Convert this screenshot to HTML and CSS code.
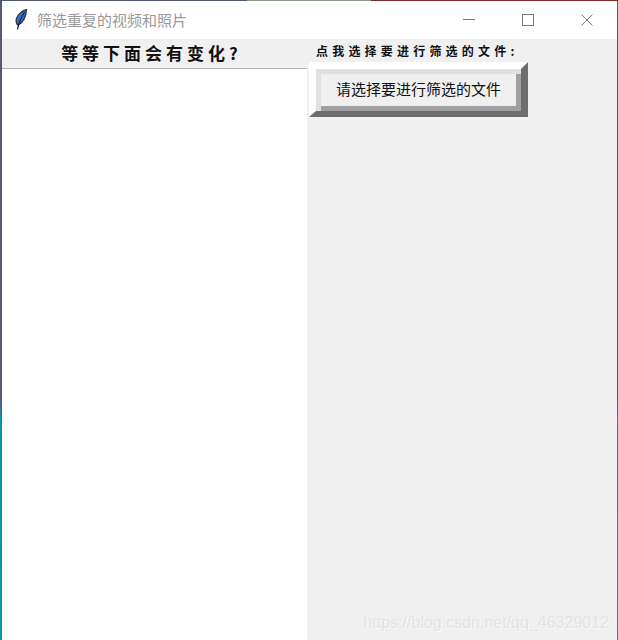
FILE: index.html
```html
<!DOCTYPE html>
<html lang="zh">
<head>
<meta charset="utf-8">
<title>筛选重复的视频和照片</title>
<link rel="stylesheet" href="styles.css">
</head>
<body>
<div class="window">
  <header class="titlebar">
    <svg class="feather" width="14" height="22" viewBox="0 0 14 22">
      <path d="M12.500 .5C8.500 1.500 4 5 2.500 9.500C1.800 12.500 2.300 14.800 3.800 16C7.500 14.500 10.500 10 11.800 5.500Z" fill="#2f78cc" stroke="#2a3442" stroke-width="1.300"/>
      <path d="M10.500 3C8 7 5 12 3.500 20.500" fill="none" stroke="#1d2430" stroke-width="1.300"/>
    </svg>
    <span class="title">筛选重复的视频和照片</span>
    <div class="controls">
      <svg class="ctl" width="12" height="12" viewBox="0 0 12 12"><path d="M0 5.500H12" stroke="#777" fill="none"/></svg>
      <svg class="ctl" width="12" height="12" viewBox="0 0 12 12"><rect x=".5" y=".5" width="11" height="11" stroke="#777" fill="none"/></svg>
      <svg class="ctl" width="12" height="12" viewBox="0 0 12 12"><path d="M.5 .5L11.500 11.500M11.500 .5L.5 11.500" stroke="#777" fill="none"/></svg>
    </div>
  </header>
  <main class="content">
    <section class="left">
      <div class="left-label">等等下面会有变化?</div>
      <div class="listbox"></div>
    </section>
    <section class="right">
      <div class="right-label">点我选择要进行筛选的文件:</div>
      <button class="pick" type="button">请选择要进行筛选的文件</button>
    </section>
  </main>
</div>
<div class="watermark">https://blog.csdn.net/qq_46329012</div>
</body>
</html>
```
FILE: styles.css
```css
* { box-sizing: border-box; }
html, body { height: 100%; }
body {
  margin: 0;
  padding: 1px 1px 0 2px;
  overflow: hidden;
  position: relative;
  font-family: "Noto Sans CJK SC", "Liberation Sans", sans-serif;
  background:
    linear-gradient(90deg, #4f5670 0 40%, #8b9a86 40% 60%, #7a2a2a 60% 100%) top / 100% 1px no-repeat,
    linear-gradient(180deg, #565a72 0, #565a72 62%, #1f8a9c 66%, #1c8f9f 100%);
}
.window { height: 100%; display: flex; flex-direction: column; background: #f0f0f0; }
.titlebar { height: 38px; background: #fff; display: flex; align-items: center; flex: none; }
.feather { margin-left: 12px; margin-top: -1px; flex: none; }
.title { margin-left: 9px; padding-bottom: 2px; font-size: 15px; color: #999; line-height: 1; }
.controls { margin-left: auto; margin-right: 24px; display: flex; gap: 47px; }
.ctl { display: block; }
.content { flex: 1; display: flex; min-height: 0; }
.left { width: 305px; display: flex; flex-direction: column; flex: none; }
.left-label {
  height: 29px;
  padding-right: 6px;
  text-align: center;
  font-size: 17px;
  font-weight: 700;
  letter-spacing: 4px;
  line-height: 27px;
  color: #111;
  white-space: nowrap;
}
.listbox { flex: 1; background: #fff; border-top: 1px solid #b4b4b4; }
.right { flex: 1; padding-left: 2px; }
.right-label {
  height: 23px;
  padding-left: 7px;
  font-size: 12px;
  font-weight: 700;
  letter-spacing: 4.2px;
  line-height: 23px;
  color: #111;
  white-space: nowrap;
}
.pick {
  display: block;
  width: 219px;
  height: 55px;
  padding: 0 0 4px;
  background: #f0f0f0;
  border-style: solid;
  border-width: 7px 7px 6px 7px;
  border-color: #fff #6d6d6d #6d6d6d #fff;
  font: 15px/1 "Noto Sans CJK SC", "Liberation Sans", sans-serif;
  color: #111;
  outline: none;
  box-shadow: inset 5px 5px 0 #e0e0e0, inset -5px -5px 0 #a0a0a0;
}
.watermark {
  position: absolute;
  right: 9px;
  bottom: 9px;
  font: 16px/1 "Liberation Sans", sans-serif;
  color: #e3e3e3;
  text-shadow: 1px 1px 0 #fafafa;
}
```
